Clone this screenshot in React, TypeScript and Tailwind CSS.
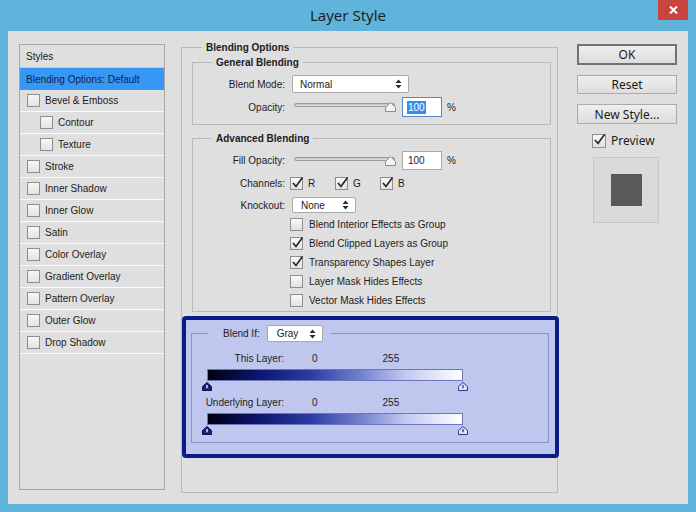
import React from 'react'

const ui = "font-['Liberation_Sans',Arial,sans-serif]"
const seg = "font-['Noto_Sans','Open_Sans',sans-serif]"

function CheckBox({ checked = false, size = 13 }: { checked?: boolean; size?: number }) {
  return (
    <span
      className={`relative inline-flex shrink-0 items-center justify-center border border-[#8e8e8e] bg-linear-to-b from-[#f8f8f8] to-[#e2e2e2] ${
        size === 14 ? 'h-[14px] w-[14px]' : 'h-[13px] w-[13px]'
      }`}
    >
      {checked && (
        <svg width="13" height="13" viewBox="0 0 13 13" className="absolute left-[0px] top-[-2px]">
          <path d="M2 7 L5 10.5 L11.5 1.5" fill="none" stroke="#262626" strokeWidth="1.7" />
        </svg>
      )}
    </span>
  )
}

function UpDown() {
  return (
    <svg width="7" height="10" viewBox="0 0 7 10">
      <path d="M3.5 0.5 L6.5 4 H0.5 Z M3.5 9.5 L6.5 6 H0.5 Z" fill="#2a2a2a" />
    </svg>
  )
}

function Select({ value, className }: { value: string; className: string }) {
  return (
    <div className={`flex items-center justify-between rounded-[2px] border border-[#a8a8a8] bg-white pr-[6px] ${className}`}>
      <span>{value}</span>
      <UpDown />
    </div>
  )
}

function Slider() {
  return (
    <div className="relative ml-[9px] h-[12px] w-[103px]">
      <div className="absolute left-0 right-[2px] top-[2px] h-[4px] rounded-full border border-[#9c9c9c] bg-linear-to-b from-[#bdbdbd] to-[#e6e6e6]" />
      <svg width="11" height="10" viewBox="0 0 11 10" className="absolute right-[1px] top-[1px]">
        <path d="M5.5 0.5 L10.5 5.5 V9.5 H0.5 V5.5 Z" fill="#f4f4f4" stroke="#8a8a8a" strokeLinejoin="round" />
      </svg>
    </div>
  )
}

function Thumb({ dark = false }: { dark?: boolean }) {
  return (
    <svg width="10" height="9" viewBox="0 0 10 9">
      <path
        d="M5 0.5 L9.5 4.5 V8.5 H0.5 V4.5 Z"
        fill={dark ? '#1b2275' : '#dfe3f7'}
        stroke={dark ? '#0b1058' : '#2d3890'}
        strokeLinejoin="round"
      />
      <path d="M5 3 V6.3" stroke={dark ? '#ffffff' : '#2d3890'} strokeWidth="1.3" />
    </svg>
  )
}

function BlendBar({ label }: { label: string }) {
  return (
    <>
      <div className="flex h-[13px]">
        <span className="w-[92px] text-right">{label}</span>
        <span className="ml-[28px]">0</span>
        <span className="ml-[65px]">255</span>
      </div>
      <div className="ml-[15px] mt-[4px] h-[12px] w-[256px] border border-[#6d76ba] bg-[linear-gradient(to_right,#00000f_0%,#0d1670_20%,#2b3aa3_40%,#7280cf_60%,#c3caef_78%,#ffffff_100%)]" />
      <div className="ml-[10px] mt-[1px] flex h-[9px] w-[266px] justify-between">
        <Thumb dark />
        <Thumb />
      </div>
    </>
  )
}

const styleItems: [string, boolean][] = [
  ['Bevel & Emboss', false],
  ['Contour', true],
  ['Texture', true],
  ['Stroke', false],
  ['Inner Shadow', false],
  ['Inner Glow', false],
  ['Satin', false],
  ['Color Overlay', false],
  ['Gradient Overlay', false],
  ['Pattern Overlay', false],
  ['Outer Glow', false],
  ['Drop Shadow', false],
]

function StylesPanel() {
  return (
    <div className="flex h-[446px] w-[146px] shrink-0 flex-col border border-[#a6a6a6]">
      <div className="flex h-[23px] items-center border-b border-[#c9c9c9] pl-[6px]">Styles</div>
      <div className="flex h-[22px] items-center bg-[#3797f5] pl-[6px] text-[#0e1f4e]">Blending Options: Default</div>
      {styleItems.map(([name, sub]) => (
        <div
          key={name}
          className={`flex h-[22px] items-center gap-[5px] border-b border-[#fafafa] ${sub ? 'pl-[20px]' : 'pl-[7px]'}`}
        >
          <CheckBox />
          <span>{name}</span>
        </div>
      ))}
    </div>
  )
}

function Middle() {
  const checks: [string, boolean][] = [
    ['Blend Interior Effects as Group', false],
    ['Blend Clipped Layers as Group', true],
    ['Transparency Shapes Layer', true],
    ['Layer Mask Hides Effects', false],
    ['Vector Mask Hides Effects', false],
  ]
  return (
    <fieldset className="-mt-[3px] ml-[16px] h-[452px] w-[377px] min-w-0 shrink-0 border border-[#bababa]">
      <legend className="ml-[20px] px-[4px] font-bold">Blending Options</legend>
      <div className="pl-[10px] pr-[6px] pt-[2px]">
        <fieldset className="min-w-0 border border-[#bababa]">
          <legend className="ml-[19px] px-[4px] font-bold">General Blending</legend>
          <div className="flex flex-col pb-[7px] pt-[6px]">
            <div className="flex h-[18px] items-center">
              <span className="w-[92px] text-right">Blend Mode:</span>
              <Select value="Normal" className="ml-[7px] h-[18px] w-[117px] pl-[7px]" />
            </div>
            <div className="mt-[4px] flex h-[20px] items-center">
              <span className="w-[92px] text-right">Opacity:</span>
              <Slider />
              <div className="ml-[5px] flex h-[20px] w-[40px] items-center border border-[#5c86bd] bg-white pl-[4px]">
                <span className="bg-[#3390f0] px-[1px] text-white">100</span>
              </div>
              <span className="ml-[5px]">%</span>
            </div>
          </div>
        </fieldset>

        <fieldset className="mt-[7px] min-w-0 border border-[#bababa]">
          <legend className="ml-[19px] px-[4px] font-bold">Advanced Blending</legend>
          <div className="flex flex-col pb-[1px] pt-[6px]">
            <div className="flex h-[19px] items-center">
              <span className="w-[92px] text-right">Fill Opacity:</span>
              <Slider />
              <div className="ml-[5px] flex h-[19px] w-[40px] items-center border border-[#a8a8a8] bg-white pl-[5px]">100</div>
              <span className="ml-[5px]">%</span>
            </div>
            <div className="mt-[7px] flex h-[13px] items-center">
              <span className="w-[92px] text-right">Channels:</span>
              <div className="ml-[5px] flex">
                {['R', 'G', 'B'].map((c) => (
                  <div key={c} className="flex w-[45px] items-center gap-[5px]">
                    <CheckBox checked />
                    <span>{c}</span>
                  </div>
                ))}
              </div>
            </div>
            <div className="mt-[7px] flex h-[16px] items-center">
              <span className="w-[92px] text-right">Knockout:</span>
              <Select value="None" className="ml-[7px] h-[16px] w-[64px] pl-[8px]" />
            </div>
            <div className="mt-[2px] flex flex-col pl-[97px]">
              {checks.map(([label, on]) => (
                <div key={label} className="flex h-[19px] items-center gap-[6px]">
                  <CheckBox checked={on} />
                  <span>{label}</span>
                </div>
              ))}
            </div>
          </div>
        </fieldset>

        <div className="-ml-[10px] mt-[4px] w-[377px] rounded-[4px] border-4 border-[#0b1c86] bg-[#c0c7ee] pb-[11px] pl-[5px] pr-[6px] pt-[5px]">
          <fieldset className="min-w-0 border border-[#8a93c9]">
            <legend className="ml-[16px] pl-[15px] pr-[8px]">
              <div className="flex items-center">
                <span>Blend If:</span>
                <Select value="Gray" className="ml-[7px] h-[17px] w-[56px] pl-[9px]" />
              </div>
            </legend>
            <div className="pb-[7px] pt-[10px]">
              <BlendBar label="This Layer:" />
              <div className="mt-[5px]">
                <BlendBar label="Underlying Layer:" />
              </div>
            </div>
          </fieldset>
        </div>
      </div>
    </fieldset>
  )
}

function RightColumn() {
  const btn = 'w-[100px] bg-linear-to-b from-[#efefef] to-[#dddddd] text-[#1a1a1a]'
  return (
    <div className={`ml-[19px] flex w-[100px] shrink-0 flex-col ${seg} text-[12px]`}>
      <button className={`${btn} h-[21px] border-2 border-[#727272] leading-[16px]`}>OK</button>
      <button className={`${btn} mt-[10px] h-[19px] border border-[#ababab] leading-[16px]`}>Reset</button>
      <button className={`${btn} mt-[10px] h-[20px] border border-[#ababab] leading-[17px]`}>New Style...</button>
      <div className="ml-[15px] mt-[10px] flex h-[14px] items-center gap-[5px] leading-[14px]">
        <CheckBox checked size={14} />
        <span>Preview</span>
      </div>
      <div className="ml-[16px] mt-[9px] flex h-[66px] w-[66px] items-center justify-center border border-[#c6c6c6] bg-[#dadada]">
        <div className="h-[32px] w-[31px] bg-[#595959]" />
      </div>
    </div>
  )
}

export default function App() {
  return (
    <div className={`flex h-[512px] w-[696px] flex-col bg-[#60b4dc] ${ui} text-[10px] leading-[13px] text-[#1c1c1c]`}>
      <div className="relative flex h-[31px] shrink-0 justify-center pt-[5px]">
        <span className={`${seg} text-[15px] leading-[20px] text-[#1f1f1f]`}>Layer Style</span>
        <div className="absolute right-[8px] top-0 flex h-[20px] w-[30px] items-center justify-center bg-[#c8443c]">
          <svg width="9" height="8" viewBox="0 0 9 8">
            <path d="M1 0.5 L8 7.5 M8 0.5 L1 7.5" stroke="#ffffff" strokeWidth="2" />
          </svg>
        </div>
      </div>
      <div className="mx-[8px] flex h-[473px] shrink-0 items-start bg-[#dfdfdf] pl-[11px] pt-[13px]">
        <StylesPanel />
        <Middle />
        <RightColumn />
      </div>
    </div>
  )
}
